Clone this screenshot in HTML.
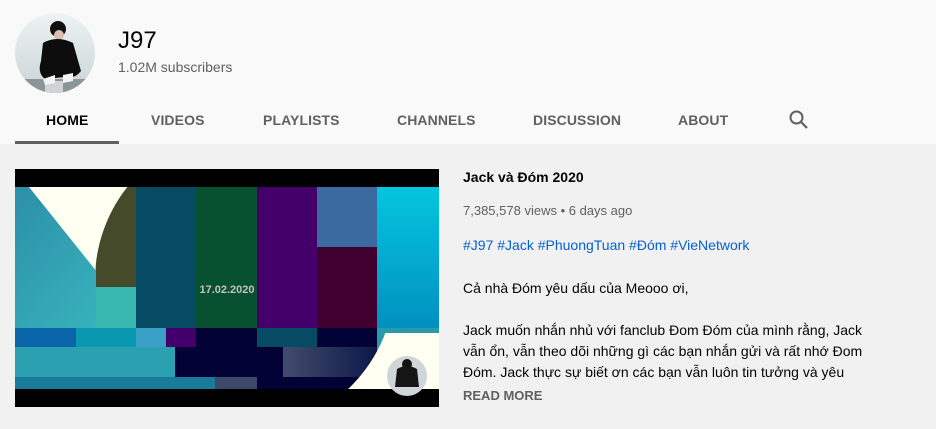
<!DOCTYPE html>
<html><head><meta charset="utf-8"><style>
*{margin:0;padding:0;box-sizing:border-box}
body{width:936px;height:429px;overflow:hidden;background:#f1f1f1;font-family:"Liberation Sans",Roboto,Arial,sans-serif;position:relative}
.hdr{position:absolute;left:0;top:0;width:936px;height:144px;background:#f9f9f9}
.abs{position:absolute;white-space:nowrap}
.tab{position:absolute;top:112px;font-size:14px;color:#606060;font-weight:bold;letter-spacing:0.1px}
.d{position:absolute;left:463px;font-size:14px;color:#030303;white-space:nowrap}
</style></head><body>
<div class="hdr"></div>
<svg class="abs" style="left:15px;top:13px" width="80" height="80" viewBox="0 0 80 80">
<defs><clipPath id="c"><circle cx="40" cy="40" r="40"/></clipPath>
<linearGradient id="bg" x1="0" y1="0" x2="0" y2="1"><stop offset="0" stop-color="#eef3f4"/><stop offset="1" stop-color="#c9d4d6"/></linearGradient></defs>
<g clip-path="url(#c)">
<rect width="80" height="80" fill="url(#bg)"/>
<rect x="0" y="66" width="80" height="14" fill="#8a9699"/>
<rect x="30" y="68" width="18" height="12" fill="#d0d4d4"/>
<ellipse cx="43" cy="16" rx="8" ry="8" fill="#111"/>
<ellipse cx="44" cy="22" rx="5" ry="5" fill="#d8c0b0"/>
<path d="M28 30 Q42 22 58 30 L66 58 Q60 66 50 64 L30 66 Q22 60 26 48 Z" fill="#0c0c0c"/>
<path d="M28 66 L40 62 L40 70 L30 72 Z" fill="#f3f3f3"/>
<path d="M48 62 L58 60 L58 68 L48 70 Z" fill="#f3f3f3"/>
</g></svg>
<div class="abs" style="left:118px;top:27px;font-size:24px;color:#030303">J97</div>
<div class="abs" style="left:118px;top:59px;font-size:14px;color:#606060">1.02M subscribers</div>
<div class="tab" style="left:46px;color:#030303">HOME</div>
<div class="tab" style="left:151px">VIDEOS</div>
<div class="tab" style="left:263px">PLAYLISTS</div>
<div class="tab" style="left:397px">CHANNELS</div>
<div class="tab" style="left:533px">DISCUSSION</div>
<div class="tab" style="left:678px">ABOUT</div>
<div class="abs" style="left:15px;top:141px;width:104px;height:3px;background:#606060"></div>
<svg class="abs" style="left:788px;top:109px" width="22" height="22" viewBox="0 0 22 22"><circle cx="8.5" cy="8.5" r="6" fill="none" stroke="#606060" stroke-width="2"/><path d="M13 13 L19 19" stroke="#606060" stroke-width="2.2"/></svg>

<svg class="abs" style="left:15px;top:169px" width="424" height="238" viewBox="0 0 424 238">
<defs>
<linearGradient id="lg" x1="0" y1="0" x2="1" y2="1"><stop offset="0" stop-color="#2c90a8"/><stop offset="1" stop-color="#3ab8c0"/></linearGradient>
<linearGradient id="rg" x1="0" y1="0" x2="0" y2="1"><stop offset="0" stop-color="#04c6de"/><stop offset="1" stop-color="#0290c0"/></linearGradient>
<linearGradient id="pg" x1="0" y1="0" x2="1" y2="0"><stop offset="0" stop-color="#424c6c"/><stop offset="1" stop-color="#0c1848"/></linearGradient>
<clipPath id="out"><path d="M0 18 H424 V220 H0 Z M80 111 A150 150 0 1 0 380 111 A150 150 0 1 0 80 111 Z" clip-rule="evenodd"/></clipPath>
</defs>
<rect width="424" height="238" fill="#000"/>
<rect x="0" y="18" width="121" height="141" fill="url(#lg)"/>
<rect x="81" y="18" width="40" height="100" fill="#454a2a"/>
<rect x="81" y="118" width="40" height="41" fill="#38b8b0"/>
<rect x="121" y="18" width="60" height="141" fill="#064a64"/>
<rect x="181" y="18" width="61" height="141" fill="#075030"/>
<rect x="242" y="18" width="60" height="141" fill="#43006a"/>
<rect x="302" y="18" width="60" height="60" fill="#3a6aa0"/>
<rect x="302" y="78" width="60" height="81" fill="#3f0030"/>
<rect x="362" y="18" width="62" height="141" fill="url(#rg)"/>
<rect x="0" y="159" width="61" height="19" fill="#0a64aa"/>
<rect x="61" y="159" width="60" height="19" fill="#0a98b0"/>
<rect x="121" y="159" width="30" height="19" fill="#3aa0c8"/>
<rect x="151" y="159" width="30" height="19" fill="#43006a"/>
<rect x="181" y="159" width="61" height="19" fill="#020236"/>
<rect x="242" y="159" width="60" height="19" fill="#064a64"/>
<rect x="302" y="159" width="60" height="19" fill="#020236"/>
<rect x="362" y="159" width="62" height="19" fill="#2a9aaa"/>
<rect x="0" y="178" width="160" height="30" fill="#2aa0b0"/>
<rect x="160" y="178" width="108" height="30" fill="#020236"/>
<rect x="268" y="178" width="94" height="30" fill="url(#pg)"/>
<rect x="362" y="178" width="62" height="30" fill="#2aa0b0"/>
<rect x="0" y="208" width="242" height="12" fill="#1a7a9a"/>
<rect x="200" y="208" width="42" height="12" fill="#3c4a6a"/>
<rect x="242" y="208" width="120" height="12" fill="#020236"/>
<g clip-path="url(#out)">
<polygon points="14,18 170,18 170,108 86,108" fill="#fffff2"/>
<polygon points="300,220 424,220 424,164 370,164" fill="#fffff2"/>
</g>
<rect x="0" y="220" width="424" height="18" fill="#000"/>
<text x="212" y="124" text-anchor="middle" font-family="Liberation Sans Narrow,Liberation Sans,sans-serif" font-weight="bold" font-size="11" fill="#c8c0c0">17.02.2020</text>
<circle cx="392" cy="207" r="20" fill="#d0d6d8"/>
<path d="M382 200 Q392 194 402 200 L404 218 L380 218 Z" fill="#151515"/>
<circle cx="392" cy="195" r="5" fill="#111"/>
</svg>

<div class="d" style="top:169px;font-weight:bold">Jack và Đóm 2020</div>
<div class="d" style="top:203px;font-size:13px;color:#606060">7,385,578 views • 6 days ago</div>
<div class="d" style="top:237px;color:#065fd4">#J97 #Jack #PhuongTuan #Đóm #VieNetwork</div>
<div class="d" style="top:280px">Cả nhà Đóm yêu dấu của Meooo ơi,</div>
<div class="d" style="top:320px;line-height:21px">Jack muốn nhắn nhủ với fanclub Đom Đóm của mình rằng, Jack<br>vẫn ổn, vẫn theo dõi những gì các bạn nhắn gửi và rất nhớ Đom<br>Đóm. Jack thực sự biết ơn các bạn vẫn luôn tin tưởng và yêu</div>
<div class="d" style="top:388px;font-size:13px;color:#606060;font-weight:bold">READ MORE</div>
</body></html>
